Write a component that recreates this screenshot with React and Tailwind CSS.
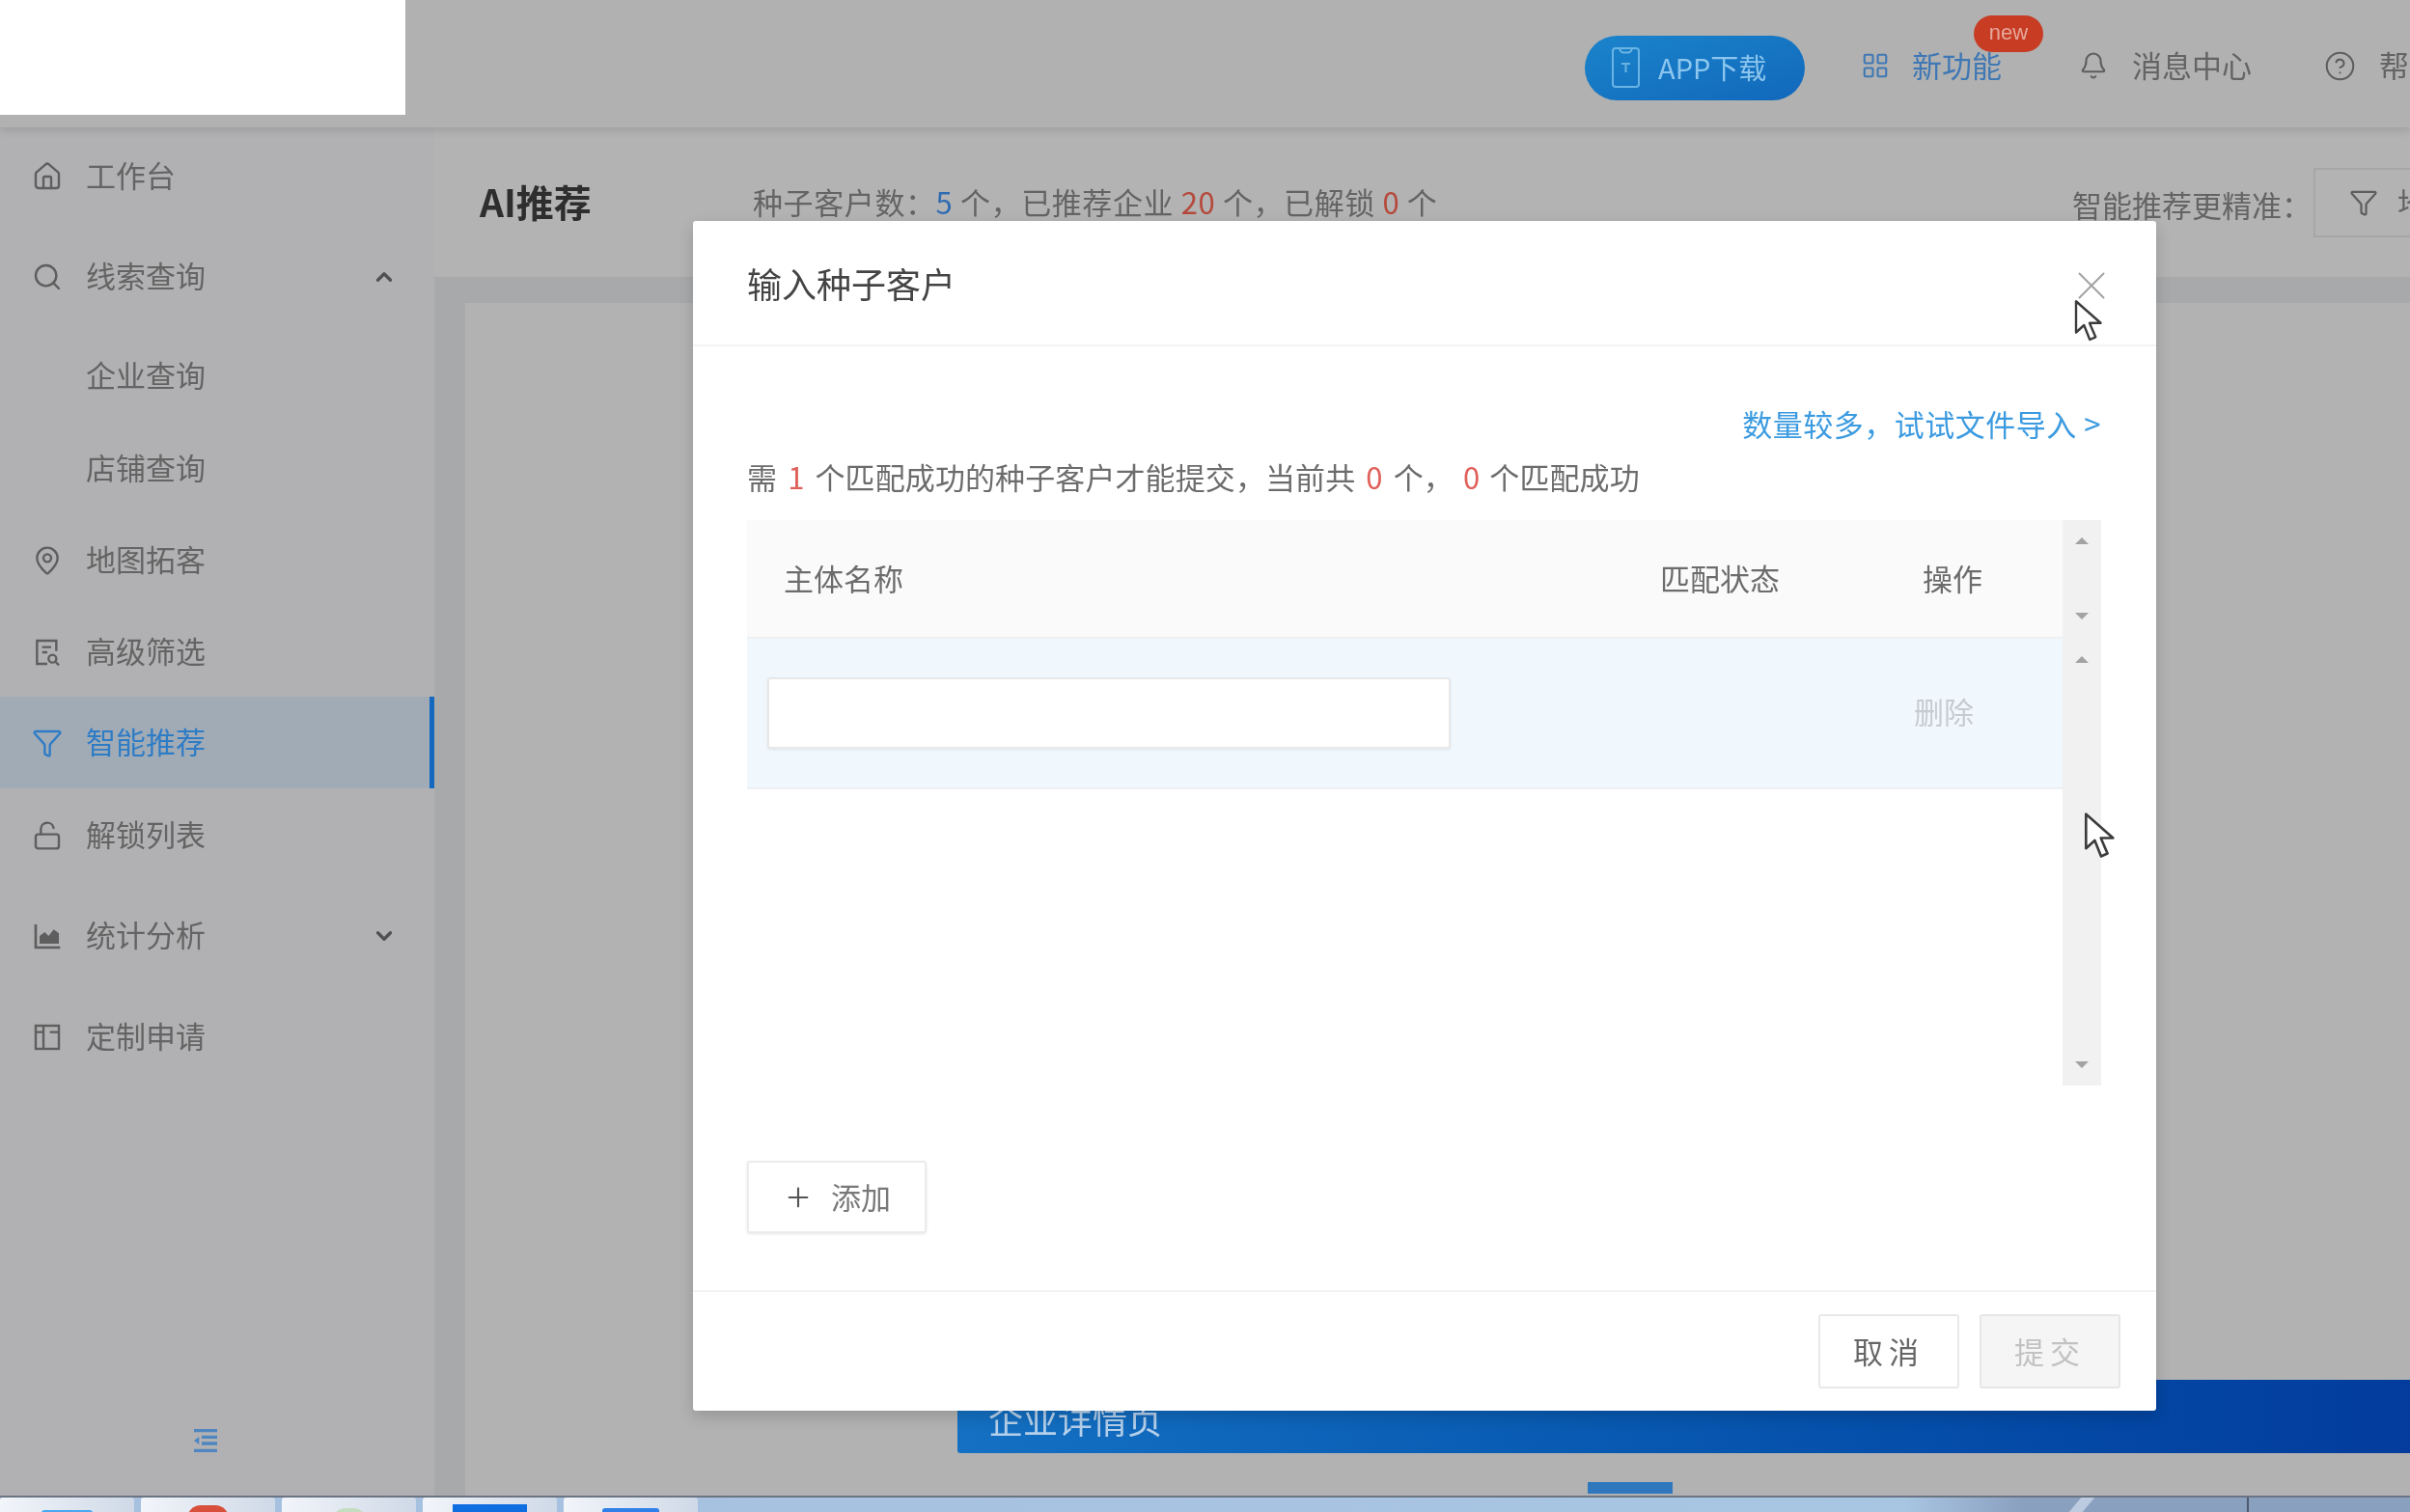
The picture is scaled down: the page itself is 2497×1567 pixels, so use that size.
import React from 'react';
import { Home, Search, ChevronUp, ChevronDown, MapPin, Funnel, LockOpen, Bell, CircleHelp, Plus, X, LayoutGrid } from 'lucide-react';

const FilterDocIcon = ({ size, ...props }) => (
  <svg width={size} height={size} viewBox="0 0 24 24" fill="none" stroke="currentColor" strokeWidth="1.8" {...props}>
    <path d="M19 11V3H4v18h8" />
    <path d="M8 8h7M8 12h4" />
    <circle cx="16" cy="17" r="3" />
    <path d="M18.500 19.500L21 22" />
  </svg>
);

const ChartIcon = ({ size, ...props }) => (
  <svg width={size} height={size} viewBox="0 0 24 24" fill="currentColor" {...props}>
    <path d="M2 3h2v17h18v2H2z" />
    <path d="M6 18v-6l4-3 3 3 4-5 4 3v8z" />
  </svg>
);

const FormIcon = ({ size, ...props }) => (
  <svg width={size} height={size} viewBox="0 0 24 24" fill="none" stroke="currentColor" strokeWidth="1.8" {...props}>
    <rect x="3" y="3" width="18" height="18" />
    <path d="M9 3v18M3 8h6M14 8h7" />
  </svg>
);

const CollapseIcon = (props) => (
  <svg viewBox="0 0 24 24" fill="currentColor" {...props}>
    <path d="M3 3h18v2.500H3zM9 8h12v2.500H9zM9 13h12v2.500H9zM3 18.500h18V21H3zM7 9v6l-4-3z" />
  </svg>
);

// phone with a notch and the small T mark, as on the download button
const PhoneIcon = (props) => (
  <svg viewBox="0 0 29 42" fill="none" stroke="currentColor" strokeWidth="2" {...props}>
    <rect x="1" y="1" width="27" height="40" rx="3" />
    <path d="M8 1.500c1 3 2 4 4 4h5c2 0 3-1 4-4" />
    <path d="M10 17h9M14.500 17v9" />
  </svg>
);

const Cursor = ({ className }) => (
  <svg viewBox="0 0 20 30" className={className}>
    <path d="M2 1.500V23l5.500-5 4 10 4-1.800-4.200-9.700H19z" fill="#fff" stroke="#3c3c3c" strokeWidth="1.600" strokeLinejoin="round" />
  </svg>
);

const Tri = ({ down }) => (
  <svg viewBox="0 0 14 7" className="w-[14px] h-[7px] text-[#a3a3a3]" fill="currentColor">
    <path d={down ? 'M0 0h14L7 7z' : 'M7 0l7 7H0z'} />
  </svg>
);

const menu = [
  { label: '工作台', Icon: Home, h: 'h-[102px]' },
  { label: '线索查询', Icon: Search, h: 'h-[106px]', arrow: ChevronUp },
  { label: '企业查询', h: 'h-[100px]' },
  { label: '店铺查询', h: 'h-[92px]' },
  { label: '地图拓客', Icon: MapPin, h: 'h-[98px]' },
  { label: '高级筛选', Icon: FilterDocIcon, h: 'h-[92px]' },
  { label: '智能推荐', Icon: Funnel, h: 'h-[95px]', active: true },
  { label: '解锁列表', Icon: LockOpen, h: 'h-[98px]' },
  { label: '统计分析', Icon: ChartIcon, h: 'h-[110px]', arrow: ChevronDown },
  { label: '定制申请', Icon: FormIcon, h: 'h-[100px]' },
];

const tabs = [
  'w-[53px] mt-[13px] rounded-t-[3px] bg-[#4aa8f0]',
  'w-[43px] mt-[8px] rounded-t-full bg-[#d8503c]',
  'w-[36px] mt-[11px] rounded-t-full bg-[#c4dcc0]',
  'w-[77px] mt-[7px] bg-[#0f6fe0]',
  'w-[59px] mt-[11px] rounded-t-[3px] bg-[#2f80e8]',
];

const App = () => {
  return (
    <div className="relative w-[2497px] h-[1567px] overflow-hidden flex flex-col bg-[#b2b2b2] text-[31px] text-[#646464] font-['Noto_Sans_CJK_SC','Noto_Sans',sans-serif] blur-[0.7px]">
      {/* top bar */}
      <header className="flex h-[132px] shrink-0 bg-[#b1b1b1] shadow-[0_4px_8px_rgba(0,0,0,0.1)] z-10">
        <div className="w-[420px] h-[119px] shrink-0 bg-white" />
        <div className="flex items-center pt-[8px] ml-[1222px] shrink-0">
          <button className="flex items-center w-[228px] h-[67px] rounded-full pl-[28px] text-[#8cc6ee] bg-gradient-to-br from-[#1b84cb] to-[#1268bb]">
            <PhoneIcon className="w-[29px] h-[42px] text-[#6ab4e4]" />
            <span className="ml-[19px] text-[29px] whitespace-nowrap">APP下载</span>
          </button>
          <LayoutGrid size={30} strokeWidth={1.7} className="ml-[58px] mb-[4px] text-[#3f78b4]" />
          <div className="relative ml-[23px] mb-[6px] text-[#3f78b4] whitespace-nowrap">
            新功能
            <span className="absolute left-[64px] top-[-28px] w-[72px] h-[38px] rounded-full bg-[#c83c24] text-[#e6a89c] text-[22px] leading-[36px] text-center font-['Liberation_Sans',sans-serif]">new</span>
          </div>
          <Bell size={30} strokeWidth={1.7} className="ml-[80px] mb-[4px] text-[#5e5e5e]" />
          <span className="ml-[25px] mb-[6px] whitespace-nowrap">消息中心</span>
          <CircleHelp size={33} strokeWidth={1.5} className="ml-[75px] mb-[4px] text-[#5e5e5e]" />
          <span className="ml-[24px] mb-[6px] whitespace-nowrap">帮助</span>
        </div>
      </header>

      <div className="flex flex-1 min-h-0">
        {/* side menu */}
        <aside className="w-[450px] shrink-0 flex flex-col bg-[#b1b1b3]">
          {menu.map((item) => (
            <div
              key={item.label}
              className={`${item.h} shrink-0 flex items-center relative ${item.active ? 'bg-[#a1abb5] text-[#2f7cc6] border-r-[5px] border-[#1468c0]' : ''}`}
            >
              <div className="w-[89px] shrink-0 flex justify-center pl-[9px]">
                {item.Icon && <item.Icon size={32} strokeWidth={1.8} className={item.active ? 'text-[#2f7cc6]' : 'text-[#5e5e5e]'} />}
              </div>
              <span className="mb-[3px]">{item.label}</span>
              {item.arrow && <item.arrow size={26} strokeWidth={3} className="ml-auto mr-[39px] text-[#505050]" />}
            </div>
          ))}
          <div className="mt-auto mb-[41px] flex justify-center pr-[24px]">
            <CollapseIcon className="w-[32px] h-[32px] text-[#4f86c0]" />
          </div>
        </aside>

        {/* page behind the dialog */}
        <main className="flex-1 min-w-0 flex flex-col bg-[#a8a9ab]">
          <div className="h-[155px] shrink-0 flex items-center pl-[47px] bg-[#b3b3b3] overflow-hidden whitespace-nowrap">
            <h1 className="w-[283px] shrink-0 text-[39px] font-bold text-[#2e2e2e] mb-[3px]">AI推荐</h1>
            <div className="w-[1367px] shrink-0 tracking-[0.6px]">
              种子客户数：<span className="text-[#2f6cb0]">5</span> 个，已推荐企业 <span className="text-[#b54a3c]">20</span> 个，已解锁 <span className="text-[#b54a3c]">0</span> 个
            </div>
            <span className="w-[250px] shrink-0 mt-[5px]">智能推荐更精准：</span>
            <div className="shrink-0 w-[200px] h-[72px] border-2 border-[#a6a6a6] flex items-center pl-[35px]">
              <Funnel size={30} strokeWidth={1.8} className="text-[#5e5e5e]" />
              <span className="ml-[20px]">地图</span>
            </div>
          </div>
          <div className="flex-1 mt-[27px] ml-[32px] bg-[#b2b2b2] overflow-hidden flex flex-col">
            <div className="mt-[1116px] ml-[510px] h-[76px] shrink-0 rounded-l-[3px] bg-gradient-to-r from-[#1470c2] to-[#033c9c] text-[#b4cfea] text-[36px] pl-[32px] pt-[20px] leading-[40px]">
              企业详情页
            </div>
            <div className="mt-[30px] ml-[1163px] w-[88px] h-[12px] shrink-0 bg-[#2f78bd]" />
          </div>
        </main>
      </div>

      {/* windows taskbar */}
      <div className="relative h-[17px] shrink-0 flex gap-[7px] border-t-2 border-[#6b7482] bg-[linear-gradient(90deg,#a6c0e0_0%,#a8c5e2_79%,#8aa0bf_84%,#8aa0bf_100%)] overflow-hidden">
        {tabs.map((icon, i) => (
          <div key={i} className="w-[139px] h-full rounded-t-[3px] bg-gradient-to-r from-[#f2f5fa] to-[#cfd9e7] flex justify-center">
            <div className={`h-[14px] ${icon}`} />
          </div>
        ))}
        <div className="absolute left-[2150px] top-0 w-[14px] h-full -skew-x-[40deg] bg-[#bccbdf]" />
        <div className="absolute left-[2328px] top-0 w-[2px] h-full bg-[#4e5a70]" />
      </div>

      {/* dialog */}
      <div className="absolute left-[718px] top-[229px] w-[1516px] h-[1233px] z-20 flex flex-col bg-white rounded-[3px] text-[#6c6c6c] shadow-[0_6px_16px_rgba(0,0,0,0.16)]">
        <div className="h-[130px] shrink-0 flex items-center justify-between pl-[56px] pr-[42px] border-b-2 border-[#f3f3f3]">
          <span className="text-[36px] text-[#444444]">输入种子客户</span>
          <X size={50} strokeWidth={1} className="mt-[5px] text-[#a4a4a4]" />
        </div>

        <div className="flex-1 flex flex-col pt-[58px] pl-[56px] pr-[57px]">
          <div className="h-[44px] leading-[44px] text-right text-[#3c9be0] whitespace-nowrap tracking-[0.5px]">数量较多，试试文件导入 &gt;</div>
          <div className="mt-[11px] h-[44px] leading-[44px] whitespace-nowrap tracking-[0.1px]">
            需 <span className="text-[#e0605a] mx-[4px]">1</span> 个匹配成功的种子客户才能提交，当前共 <span className="text-[#e0605a] mx-[4px]">0</span> 个， <span className="text-[#e0605a] mx-[3px]">0</span> 个匹配成功
          </div>

          <div className="mt-[23px] h-[586px] flex">
            <div className="flex-1 min-w-0">
              <div className="h-[123px] flex items-center bg-[#fafafa] border-b-2 border-[#eef0f2]">
                <span className="w-[946px] pl-[38px]">主体名称</span>
                <span className="w-[272px]">匹配状态</span>
                <span>操作</span>
              </div>
              <div className="h-[156px] flex items-center bg-[#f0f7fd] border-b-2 border-[#eef1f4] pl-[21px]">
                <input className="w-[708px] h-[74px] bg-white border-2 border-[#e8e8e8] rounded-[3px] shadow-[0_1px_3px_rgba(0,0,0,0.08)]" />
                <span className="ml-auto w-[154px] text-[#c6cbd1] mb-[3px]">删除</span>
              </div>
            </div>
            <div className="w-[40px] shrink-0 bg-[#f1f1f1] flex flex-col items-center">
              <div className="h-[121px] flex flex-col items-center justify-between py-[18px]">
                <Tri />
                <Tri down />
              </div>
              <div className="flex-1 flex flex-col items-center justify-between pt-[20px] pb-[18px]">
                <Tri />
                <Tri down />
              </div>
            </div>
          </div>

          <button className="mt-[78px] w-[186px] h-[75px] flex items-center justify-center gap-[18px] bg-white border-2 border-[#ececec] rounded-[3px] shadow-[0_1px_3px_rgba(0,0,0,0.1)] text-[#787878]">
            <Plus size={32} strokeWidth={1.6} className="text-[#555555]" />
            添加
          </button>
        </div>

        <div className="h-[125px] shrink-0 flex items-start justify-end gap-[21px] pt-[23px] pr-[37px] border-t-2 border-[#f3f3f3]">
          <button className="w-[146px] h-[77px] bg-white border-2 border-[#e9e9e9] rounded-[3px] tracking-[6px] text-[#666666]">取消</button>
          <button className="w-[146px] h-[77px] bg-[#f5f5f5] border-2 border-[#e6e6e6] rounded-[3px] tracking-[6px] text-[#c2c2c2]">提交</button>
        </div>
      </div>

      {/* mouse trail from the recording */}
      <Cursor className="absolute left-[2148px] top-[310px] w-[30px] h-[45px] z-30" />
      <Cursor className="absolute left-[2158px] top-[841px] w-[33px] h-[50px] z-30" />
    </div>
  );
};

export default App;
